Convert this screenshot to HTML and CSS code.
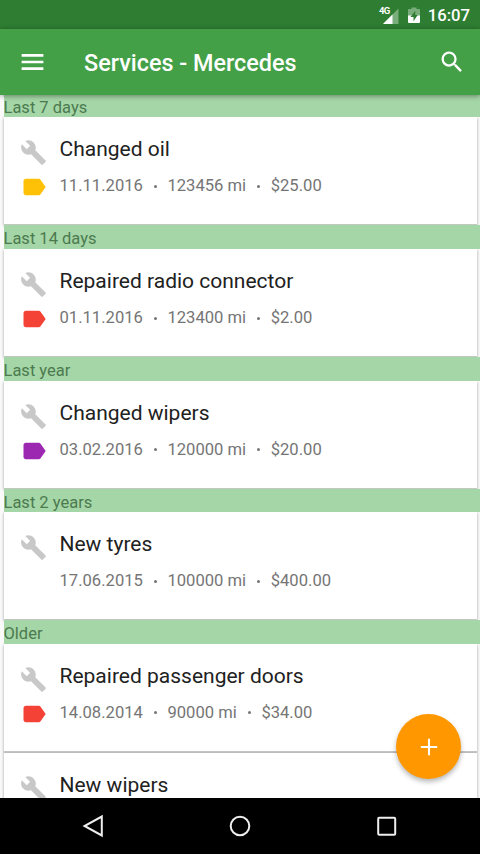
FILE: index.html
```html
<!DOCTYPE html>
<html lang="en">
<head>
<meta charset="utf-8">
<title>Services - Mercedes</title>
<link rel="stylesheet" href="styles.css">
</head>
<body>
<svg class="defs" aria-hidden="true">
  <symbol id="wrench" viewBox="0 0 24 24"><path d="M22.7 19l-9.1-9.1c.9-2.3.4-5-1.5-6.9-2-2-5-2.4-7.4-1.3L9 6 6 9 1.6 4.7C.4 7.1.9 10.1 2.9 12.1c1.9 1.9 4.6 2.4 6.9 1.5l9.1 9.1c.4.4 1 .4 1.4 0l2.3-2.3c.5-.4.5-1.1.1-1.4z"/></symbol>
  <symbol id="label" viewBox="0 0 24 24"><path d="M17.63 5.84C17.27 5.33 16.67 5 16 5L5 5.01C3.9 5.01 3 5.9 3 7v10c0 1.1.9 1.99 2 1.99L16 19c.67 0 1.27-.33 1.63-.84L22 12l-4.37-6.16z"/></symbol>
</svg>
<div class="screen">
  <div class="status">
    <svg class="signal" width="22" height="20" viewBox="0 0 22 20"><path d="M20.500 3.500V19H5z" fill="#79ad7b"/><path d="M14.500 9.500V19H5z" fill="#fff"/></svg>
    <span class="network">4G</span>
    <svg class="battery" width="12" height="17" viewBox="0 0 12 18" preserveAspectRatio="none"><path d="M3.500 2V.5h5V2H11q1 0 1 1v7H0V3q0-1 1-1z" fill="#79ad7b"/><path d="M0 9h12v7q0 1-1 1H1q-1 0-1-1z" fill="#fff"/><path d="M7.200 4L2.500 10.500H5.500V15L9.700 8.500H7.200z" fill="#2e7d32"/></svg>
    <span class="clock">16:07</span>
  </div>
  <header class="appbar">
    <svg class="menu" width="29" height="32" viewBox="0 0 24 24" preserveAspectRatio="none"><path d="M3 18h18v-2H3v2zm0-5h18v-2H3v2zm0-7v2h18V6H3z"/></svg>
    <h1>Services - Mercedes</h1>
    <svg class="search" width="28" height="28" viewBox="0 0 24 24"><path d="M15.500 14h-.79l-.28-.27A6.471 6.471 0 0 0 16 9.500 6.500 6.500 0 1 0 9.500 16c1.610 0 3.090-.59 4.230-1.570l.27.28v.79l5 4.990L20.490 19l-4.990-5zm-6 0C7.010 14 5 11.990 5 9.500S7.010 5 9.500 5 14 7.010 14 9.500 11.990 14 9.500 14z"/></svg>
  </header>
  <main class="list">
    <h2>Last 7 days</h2>
    <article>
      <svg class="wrench"><use href="#wrench"/></svg><h3>Changed oil</h3>
      <svg class="label yellow"><use href="#label"/></svg>
      <p><span>11.11.2016</span><i></i><span>123456 mi</span><i></i><span>$25.00</span></p>
    </article>
    <h2>Last 14 days</h2>
    <article>
      <svg class="wrench"><use href="#wrench"/></svg><h3>Repaired radio connector</h3>
      <svg class="label red"><use href="#label"/></svg>
      <p><span>01.11.2016</span><i></i><span>123400 mi</span><i></i><span>$2.00</span></p>
    </article>
    <h2>Last year</h2>
    <article>
      <svg class="wrench"><use href="#wrench"/></svg><h3>Changed wipers</h3>
      <svg class="label purple"><use href="#label"/></svg>
      <p><span>03.02.2016</span><i></i><span>120000 mi</span><i></i><span>$20.00</span></p>
    </article>
    <h2>Last 2 years</h2>
    <article>
      <svg class="wrench"><use href="#wrench"/></svg><h3>New tyres</h3>
      <p><span>17.06.2015</span><i></i><span>100000 mi</span><i></i><span>$400.00</span></p>
    </article>
    <h2>Older</h2>
    <article class="stacked">
      <svg class="wrench"><use href="#wrench"/></svg><h3>Repaired passenger doors</h3>
      <svg class="label red"><use href="#label"/></svg>
      <p><span>14.08.2014</span><i></i><span>90000 mi</span><i></i><span>$34.00</span></p>
    </article>
    <article>
      <svg class="wrench"><use href="#wrench"/></svg><h3>New wipers</h3>
    </article>
  </main>
  <button class="fab" aria-label="Add"><svg width="28" height="28" viewBox="0 0 24 24"><path d="M19 12.900h-6.100v6.100h-1.800v-6.100H5v-1.800h6.100V5h1.800v6.100h6.100z"/></svg></button>
  <nav class="nav">
    <svg width="24" height="24" viewBox="0 0 24 24"><path d="M20.800 2.500V21.500L3.500 12z"/></svg>
    <svg width="24" height="24" viewBox="0 0 24 24"><circle cx="12" cy="12" r="9.300"/></svg>
    <svg width="24" height="24" viewBox="0 0 24 24"><rect x="3.200" y="3.700" width="17" height="17" rx="1"/></svg>
  </nav>
</div>
</body>
</html>
```
FILE: styles.css
```css
* { box-sizing: border-box; }
body { margin: 0; font-family: Roboto, "Liberation Sans", sans-serif; }
h1, h2, h3, p { margin: 0; font-weight: 400; white-space: nowrap; }
.defs { position: absolute; width: 0; height: 0; }
.screen {
  position: relative;
  display: flex;
  flex-direction: column;
  width: 480px;
  height: 854px;
  overflow: hidden;
  background: #fafafa;
}
.status {
  position: relative;
  flex: none;
  display: flex;
  align-items: center;
  justify-content: flex-end;
  height: 29px;
  padding: 2px 10px 0 0;
  background: #2e7d32;
  color: #fff;
}
.signal { margin: -1px 8px 0 0; }
.network { position: absolute; left: 379px; top: 5px; font-size: 9.5px; line-height: 11px; font-weight: 700; letter-spacing: -.6px; }
.battery { margin-right: 8px; }
.clock { font-size: 16.7px; line-height: 20px; font-weight: 500; }
.appbar {
  position: relative;
  z-index: 2;
  flex: none;
  display: flex;
  align-items: center;
  height: 66px;
  padding: 0 14.5px 0 18px;
  background: #43a047;
  color: #fff;
  box-shadow: 0 1px 5px rgba(0, 0, 0, .4);
}
.appbar svg { fill: #fff; }
.appbar h1 { flex: 1; padding: 2px 0 0 37px; font-size: 23.4px; line-height: 30px; font-weight: 500; }
.list {
  flex: 1;
  min-height: 0;
  overflow: hidden;
  padding-left: 4px;
}
.list h2 {
  position: relative;
  z-index: 1;
  height: 23.67px;
  padding-top: 1px;
  margin-left: -.5px;
  background: #a5d6a7;
  color: #4c7a4f;
  font-size: 16.5px;
  line-height: 25px;
}
.list h2:first-child { margin-top: -1.3px; }
article {
  display: grid;
  grid-template-columns: 39.5px 1fr;
  grid-template-rows: 36px 38px;
  align-content: start;
  align-items: center;
  width: 472.5px;
  height: 108px;
  padding: 14px 0 0 16px;
  background: #fff;
  border-bottom: 1px solid #c2c9c0;
  box-shadow: 0 1px 3px rgba(0, 0, 0, .35);
}
.stacked { height: 109px; border-bottom: 2px solid #c8c8c8; }
.wrench { width: 27px; height: 27px; margin-top: 7px; fill: #c8c8c8; }
.label { width: 28px; height: 28px; margin-top: 2px; }
.yellow { fill: #ffc107; }
.red { fill: #f44336; }
.purple { fill: #9c27b0; }
article h3 { font-size: 21px; line-height: 26px; color: #212121; }
article p {
  grid-column: 2;
  display: flex;
  align-items: center;
  font-size: 16.6px;
  line-height: 20px;
  color: #757575;
}
article i { width: 3px; height: 3px; margin: 0 10.8px; border-radius: 50%; background: #757575; }
.fab {
  position: absolute;
  z-index: 2;
  left: 396px;
  top: 714px;
  display: grid;
  place-items: center;
  width: 65px;
  height: 65px;
  padding: 0;
  border: 0;
  border-radius: 50%;
  background: #ff9800;
  box-shadow: 0 3px 5px rgba(0, 0, 0, .28);
}
.fab svg { fill: #fff; }
.nav {
  position: relative;
  z-index: 1;
  flex: none;
  display: flex;
  justify-content: center;
  gap: 123px;
  height: 56px;
  padding-top: 16px;
  background: #000;
}
.nav svg { fill: none; stroke: #eee; stroke-width: 2; }
```
